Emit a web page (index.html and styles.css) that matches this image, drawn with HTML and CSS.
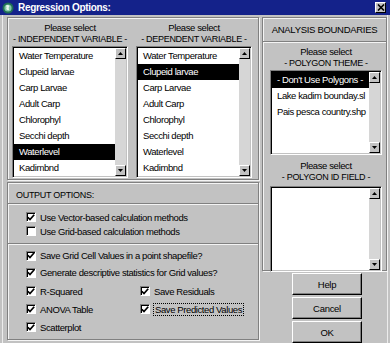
FILE: index.html
```html
<!DOCTYPE html>
<html lang="en">
<head>
    <meta charset="UTF-8">
    <title>Regression Options</title>
    <link rel="stylesheet" href="styles.css">
</head>
<body>
    <div class="window">
        <!-- Title bar -->
        <div class="titlebar">
            <span class="title-icon">
                <svg width="12" height="12" viewBox="0 0 12 12">
                    <circle cx="6" cy="6" r="5.5" fill="#1f6f55"/>
                    <circle cx="6" cy="6" r="3.6" fill="#7fc7a4"/>
                    <path d="M4 3.5 Q6 2.5 7.5 4 Q6 5.5 7 8 Q5 8.5 4.2 7 Q5 5.5 4 3.5Z" fill="#e8f4ee"/>
                </svg>
            </span>
            <span class="title-text">Regression Options:</span>
            <span class="close-btn">
                <svg width="8" height="7" viewBox="0 0 8 7">
                    <path d="M1 0.5 L7 6.5 M7 0.5 L1 6.5" stroke="#000" stroke-width="1.6"/>
                </svg>
            </span>
        </div>

        <div class="dialog">
            <div class="left-col">
                <!-- Variable lists -->
                <div class="panel vars-panel">
                    <div class="var-col">
                        <div class="caption">Please select<br><span class="caps">- INDEPENDENT VARIABLE -</span></div>
                        <div class="listbox tall">
                            <ul class="items">
                                <li>Water Temperature</li>
                                <li>Clupeid larvae</li>
                                <li>Carp Larvae</li>
                                <li>Adult Carp</li>
                                <li>Chlorophyl</li>
                                <li>Secchi depth</li>
                                <li class="selected">Waterlevel</li>
                                <li>Kadimbnd</li>
                            </ul>
                            <div class="scrollbar">
                                <span class="arrow"><svg width="5" height="3" viewBox="0 0 5 3"><path d="M2.5 0 L5 3 L0 3Z"/></svg></span>
                                <span class="track"></span>
                                <span class="arrow"><svg width="5" height="3" viewBox="0 0 5 3"><path d="M0 0 L5 0 L2.5 3Z"/></svg></span>
                            </div>
                        </div>
                    </div>
                    <div class="var-col">
                        <div class="caption">Please select<br><span class="caps">- DEPENDENT VARIABLE -</span></div>
                        <div class="listbox tall">
                            <ul class="items">
                                <li>Water Temperature</li>
                                <li class="selected">Clupeid larvae</li>
                                <li>Carp Larvae</li>
                                <li>Adult Carp</li>
                                <li>Chlorophyl</li>
                                <li>Secchi depth</li>
                                <li>Waterlevel</li>
                                <li>Kadimbnd</li>
                            </ul>
                            <div class="scrollbar">
                                <span class="arrow"><svg width="5" height="3" viewBox="0 0 5 3"><path d="M2.5 0 L5 3 L0 3Z"/></svg></span>
                                <span class="track"></span>
                                <span class="arrow"><svg width="5" height="3" viewBox="0 0 5 3"><path d="M0 0 L5 0 L2.5 3Z"/></svg></span>
                            </div>
                        </div>
                    </div>
                </div>

                <!-- Output options -->
                <div class="panel output-panel">
                    <div class="output-head caps">OUTPUT OPTIONS:</div>
                    <div class="opt-group first">
                        <div class="check"><span class="box"><svg width="8" height="7" viewBox="0 0 8 7"><path d="M0.8 3.2 L3 5.6 L7.2 0.8" stroke="#000" stroke-width="1.7" fill="none"/></svg></span>Use Vector-based calculation methods</div>
                        <div class="check"><span class="box"></span>Use Grid-based calculation methods</div>
                    </div>
                    <div class="opt-group second">
                        <div class="check"><span class="box"><svg width="8" height="7" viewBox="0 0 8 7"><path d="M0.8 3.2 L3 5.6 L7.2 0.8" stroke="#000" stroke-width="1.7" fill="none"/></svg></span>Save Grid Cell Values in a point shapefile?</div>
                        <div class="check"><span class="box"><svg width="8" height="7" viewBox="0 0 8 7"><path d="M0.8 3.2 L3 5.6 L7.2 0.8" stroke="#000" stroke-width="1.7" fill="none"/></svg></span>Generate descriptive statistics for Grid values?</div>
                        <div class="opt-grid">
                            <div class="check"><span class="box"><svg width="8" height="7" viewBox="0 0 8 7"><path d="M0.8 3.2 L3 5.6 L7.2 0.8" stroke="#000" stroke-width="1.7" fill="none"/></svg></span>R-Squared</div>
                            <div class="check"><span class="box"><svg width="8" height="7" viewBox="0 0 8 7"><path d="M0.8 3.2 L3 5.6 L7.2 0.8" stroke="#000" stroke-width="1.7" fill="none"/></svg></span>Save Residuals</div>
                            <div class="check"><span class="box"><svg width="8" height="7" viewBox="0 0 8 7"><path d="M0.8 3.2 L3 5.6 L7.2 0.8" stroke="#000" stroke-width="1.7" fill="none"/></svg></span>ANOVA Table</div>
                            <div class="check"><span class="box"><svg width="8" height="7" viewBox="0 0 8 7"><path d="M0.8 3.2 L3 5.6 L7.2 0.8" stroke="#000" stroke-width="1.7" fill="none"/></svg></span><span class="focus">Save Predicted Values</span></div>
                            <div class="check"><span class="box"><svg width="8" height="7" viewBox="0 0 8 7"><path d="M0.8 3.2 L3 5.6 L7.2 0.8" stroke="#000" stroke-width="1.7" fill="none"/></svg></span>Scatterplot</div>
                        </div>
                    </div>
                </div>
            </div>

            <div class="right-col">
                <!-- Analysis boundaries -->
                <div class="panel bounds-panel">
                    <div class="bounds-head">ANALYSIS BOUNDARIES</div>
                    <div class="bounds-body">
                        <div class="caption">Please select<br><span class="caps">- POLYGON THEME -</span></div>
                        <div class="listbox short">
                            <ul class="items">
                                <li class="selected">- Don't Use Polygons -</li>
                                <li>Lake kadim bounday.sl</li>
                                <li>Pais pesca country.shp</li>
                            </ul>
                            <div class="scrollbar">
                                <span class="arrow"><svg width="5" height="3" viewBox="0 0 5 3"><path d="M2.5 0 L5 3 L0 3Z"/></svg></span>
                                <span class="track"></span>
                                <span class="arrow"><svg width="5" height="3" viewBox="0 0 5 3"><path d="M0 0 L5 0 L2.5 3Z"/></svg></span>
                            </div>
                        </div>
                        <div class="caption second-caption">Please select<br><span class="caps">- POLYGON ID FIELD -</span></div>
                        <div class="listbox short id-list">
                            <ul class="items"></ul>
                            <div class="scrollbar">
                                <span class="arrow"><svg width="5" height="3" viewBox="0 0 5 3"><path d="M2.5 0 L5 3 L0 3Z"/></svg></span>
                                <span class="track"></span>
                                <span class="arrow"><svg width="5" height="3" viewBox="0 0 5 3"><path d="M0 0 L5 0 L2.5 3Z"/></svg></span>
                            </div>
                        </div>
                    </div>
                </div>

                <div class="buttons">
                    <button class="btn">Help</button>
                    <button class="btn">Cancel</button>
                    <button class="btn">OK</button>
                </div>
            </div>
        </div>
    </div>
</body>
</html>
```

FILE: styles.css
```css
* {
    margin: 0;
    padding: 0;
    box-sizing: border-box;
}

body {
    font-family: "Liberation Sans", Arial, sans-serif;
    font-size: 9.5px;
    letter-spacing: -0.4px;
    color: #000;
    background: #c2c2c2;
}

.caps {
    font-size: 9px;
    letter-spacing: -0.3px;
}

.window {
    width: 390px;
    height: 343px;
    overflow: hidden;
    background: #c2c2c2;
    box-shadow: inset 2px 0 #c2c2c2, inset 3px 0 #ececec, inset -2px 0 #c2c2c2, inset -3px 0 #ececec;
}

/* Title bar */
.titlebar {
    height: 15px;
    display: flex;
    align-items: center;
    padding: 0 4px 0 2px;
    background: #14228a;
}

.title-icon {
    display: flex;
    width: 12px;
    height: 12px;
}

.title-text {
    margin-left: 4px;
    color: #fff;
    font-weight: bold;
    font-size: 10px;
    letter-spacing: -0.3px;
}

.close-btn {
    margin-left: auto;
    width: 11px;
    height: 11px;
    display: flex;
    align-items: center;
    justify-content: center;
    background: #c2c2c2;
    border: 1px solid;
    border-color: #fff #000 #000 #fff;
}

/* Layout */
.dialog {
    display: grid;
    grid-template-columns: 252px 125px;
    column-gap: 3px;
    padding: 2px 3px 0 7px;
}

.left-col {
    display: flex;
    flex-direction: column;
    gap: 2px;
}

.panel {
    border: 1px solid #808080;
    box-shadow: inset 1px 1px #f4f4f4, 1px 1px #f4f4f4;
}

/* Variable lists */
.vars-panel {
    height: 163px;
    display: flex;
    gap: 8px;
    padding: 4px 5px 0 4px;
}

.var-col {
    width: 116px;
}

.caption {
    text-align: center;
    line-height: 11px;
    margin-bottom: 1px;
    white-space: nowrap;
}

.listbox {
    display: flex;
    background: #fff;
    border: 1px solid;
    border-color: #808080 #fff #fff #808080;
    box-shadow: inset 1px 1px #000, inset -1px -1px #c2c2c2;
    padding: 1px;
}

.listbox.tall {
    height: 132px;
}

.listbox.short {
    height: 85px;
}

.items {
    flex: 1;
    min-width: 0;
    list-style: none;
}

.items li {
    height: 16px;
    line-height: 16px;
    padding-left: 5px;
    white-space: nowrap;
    overflow: hidden;
}

.items li.selected {
    background: #000;
    color: #fff;
}

.scrollbar {
    width: 11px;
    flex: none;
    display: flex;
    flex-direction: column;
    background: #d6d6d6;
}

.arrow {
    height: 11px;
    display: flex;
    align-items: center;
    justify-content: center;
    background: #c2c2c2;
    border: 1px solid;
    border-color: #fff #000 #000 #fff;
}

.track {
    flex: 1;
}

/* Output options */
.output-head {
    height: 21px;
    padding: 4px 0 0 8px;
    line-height: 16px;
    border-bottom: 1px solid #808080;
    box-shadow: 0 1px #f4f4f4;
}

.output-panel {
    height: 158px;
}

.opt-group {
    padding-left: 18px;
}

.opt-group.first {
    padding-top: 6px;
    padding-bottom: 5px;
    border-bottom: 1px solid #808080;
    box-shadow: 0 1px #f4f4f4;
}

.opt-group.first .check {
    height: 14px;
}

.opt-group.second {
    padding-top: 3px;
}

.check {
    display: flex;
    align-items: center;
    gap: 4px;
    height: 17px;
    white-space: nowrap;
}

.box {
    width: 10px;
    height: 10px;
    flex: none;
    display: flex;
    align-items: center;
    justify-content: center;
    background: #fff;
    border: 1px solid;
    border-color: #808080 #fff #fff #808080;
    box-shadow: inset 1px 1px #000;
}

.opt-grid {
    display: grid;
    grid-template-columns: 114px 1fr;
    margin-top: 1px;
}

.opt-grid .check {
    height: 18px;
}

.focus {
    outline: 1px dotted #000;
    padding: 0 1px;
}

/* Analysis boundaries */
.bounds-panel {
    height: 254px;
}

.bounds-head {
    height: 24px;
    line-height: 23px;
    text-align: center;
    font-size: 9.5px;
    letter-spacing: -0.3px;
    border-bottom: 1px solid #808080;
    box-shadow: 0 1px #f4f4f4;
}

.bounds-body {
    padding: 4px 4px 0 7px;
}

.second-caption {
    margin-top: 5px;
    margin-bottom: 3px;
}

.listbox.id-list {
    height: 86px;
}

.buttons {
    display: flex;
    flex-direction: column;
    align-items: center;
    gap: 2px;
    padding: 2px 0 0 5px;
}

.btn {
    width: 70px;
    height: 22px;
    font-family: inherit;
    font-size: 9.5px;
    letter-spacing: -0.3px;
    background: #c2c2c2;
    border: 1px solid;
    border-color: #fff #000 #000 #fff;
    box-shadow: inset -1px -1px #808080;
}
```
